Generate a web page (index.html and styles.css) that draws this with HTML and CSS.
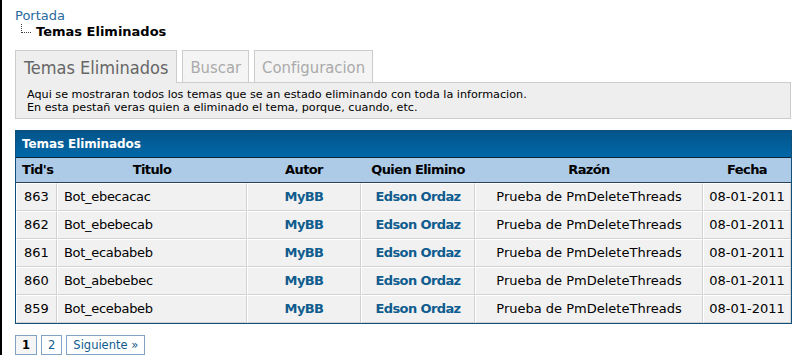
FILE: index.html
```html
<!DOCTYPE html>
<html lang="es">
<head>
<meta charset="utf-8">
<title>Temas Eliminados</title>
<link rel="stylesheet" href="styles.css">
</head>
<body>
<div class="page">
  <nav class="crumbs">
    <a class="crumb-link" href="#">Portada</a>
    <div class="crumb-current">
      <span class="tree"></span>
      <span class="crumb-title">Temas Eliminados</span>
    </div>
  </nav>

  <div class="tabs">
    <span class="tab active">Temas Eliminados</span>
    <span class="tab">Buscar</span>
    <span class="tab">Configuracion</span>
  </div>
  <div class="tab-panel">
    Aqui se mostraran todos los temas que se an estado eliminando con toda la informacion.<br>
    En esta pestañ veras quien a eliminado el tema, porque, cuando, etc.
  </div>

  <table class="tborder">
    <colgroup>
      <col class="c-tid"><col class="c-titulo"><col class="c-autor"><col class="c-quien"><col class="c-razon"><col class="c-fecha">
    </colgroup>
    <thead>
      <tr><th class="thead" colspan="6">Temas Eliminados</th></tr>
      <tr class="tcat">
        <th class="left">Tid's</th>
        <th>Titulo</th>
        <th>Autor</th>
        <th>Quien Elimino</th>
        <th>Razón</th>
        <th>Fecha</th>
      </tr>
    </thead>
    <tbody>
      <tr><td>863</td><td class="left">Bot_ebecacac</td><td><a href="#">MyBB</a></td><td><a href="#">Edson Ordaz</a></td><td>Prueba de PmDeleteThreads</td><td class="date">08-01-2011</td></tr>
      <tr><td>862</td><td class="left">Bot_ebebecab</td><td><a href="#">MyBB</a></td><td><a href="#">Edson Ordaz</a></td><td>Prueba de PmDeleteThreads</td><td class="date">08-01-2011</td></tr>
      <tr><td>861</td><td class="left">Bot_ecababeb</td><td><a href="#">MyBB</a></td><td><a href="#">Edson Ordaz</a></td><td>Prueba de PmDeleteThreads</td><td class="date">08-01-2011</td></tr>
      <tr><td>860</td><td class="left">Bot_abebebec</td><td><a href="#">MyBB</a></td><td><a href="#">Edson Ordaz</a></td><td>Prueba de PmDeleteThreads</td><td class="date">08-01-2011</td></tr>
      <tr><td>859</td><td class="left">Bot_ecebabeb</td><td><a href="#">MyBB</a></td><td><a href="#">Edson Ordaz</a></td><td>Prueba de PmDeleteThreads</td><td class="date">08-01-2011</td></tr>
    </tbody>
  </table>

  <div class="pagination">
    <span class="page-current">1</span>
    <a class="page-link" href="#">2</a>
    <a class="page-link" href="#">Siguiente »</a>
  </div>
</div>
</body>
</html>
```

FILE: styles.css
```css
html, body {
  margin: 0;
  padding: 0;
  background: #fff;
}

body {
  font-family: "DejaVu Sans", Verdana, sans-serif;
  font-size: 13px;
  color: #000;
}

a {
  color: #0f5c8e;
  text-decoration: none;
}

.page {
  border-left: 2px solid #000;
  min-height: 355px;
  box-sizing: border-box;
  padding: 8px 10px 0 13px;
}

/* breadcrumb */
.crumbs {
  line-height: 16px;
}

.crumb-link {
  color: #2a6a9e;
  display: block;
}

.crumb-current {
  display: flex;
  align-items: flex-start;
}

.tree {
  width: 9px;
  height: 8px;
  margin: 0 5px 0 6px;
  border-left: 1px dotted #444;
  border-bottom: 1px dotted #444;
}

.crumb-title {
  font-weight: bold;
}

/* tabs */
.tabs {
  display: flex;
  gap: 5px;
  margin-top: 10px;
  position: relative;
  z-index: 1;
}

.tab {
  font-family: "DejaVu Sans Condensed", sans-serif;
  font-size: 16.5px;
  line-height: 22px;
  color: #aaa;
  background: #f4f4f4;
  border: 1px solid #ccc;
  border-bottom: none;
  padding: 6px 7px 3px;
}

.tab.active {
  font-size: 18px;
  color: #666;
  background: #eee;
  padding: 6px 8px 4px 8px;
  margin-bottom: -1px;
}

.tab-panel {
  background: #eee;
  border: 1px solid #ccc;
  font-size: 11.2px;
  line-height: 13px;
  padding: 5px 11px 4px;
}

/* table */
.tborder {
  width: 777px;
  margin-top: 11px;
  border: 1px solid #0f4f7c;
  border-spacing: 0;
  table-layout: fixed;
  background: #fff;
}

.c-tid { width: 41px; }
.c-titulo { width: 190px; }
.c-autor { width: 114px; }
.c-quien { width: 114px; }
.c-razon { width: 228px; }
.c-fecha { width: 88px; }

.tborder th,
.tborder td {
  line-height: 16px;
  padding: 5px 6px;
  text-align: center;
  white-space: nowrap;
}

.tborder th.thead {
  background: linear-gradient(#04548a, #0068a8);
  color: #fff;
  font-size: 12px;
  letter-spacing: -0.1px;
  text-align: left;
  border-bottom: 1px solid #0c2436;
  padding: 5px 6px 5px 6px;
}

.tcat th {
  background: #adcbe7;
  padding: 4px 6px;
  letter-spacing: -0.6px;
  border-bottom: 1px solid #2b4157;
}

.tborder th.left {
  text-align: left;
}

.tborder td {
  background: #f1f1f1;
  border-top: 1px solid #fff;
  border-left: 1px solid #fff;
  border-bottom: 1px solid #d2d2d2;
  border-right: 1px solid #d2d2d2;
}

.tborder td.left {
  text-align: left;
  letter-spacing: -0.3px;
}

.tborder td.date {
  padding-left: 3px;
  padding-right: 3px;
}

.tborder td a {
  font-weight: bold;
  letter-spacing: -0.6px;
}

/* pagination */
.pagination {
  display: flex;
  gap: 4px;
  margin-top: 11px;
  font-size: 11.5px;
  line-height: 18px;
}

.page-current,
.page-link {
  border: 1px solid #81a4c4;
  padding: 0 6px;
}

.page-current {
  font-weight: bold;
  background: #f5f5f5;
}

.page-link {
  color: #0f5c8e;
  background: #fff;
}
```
